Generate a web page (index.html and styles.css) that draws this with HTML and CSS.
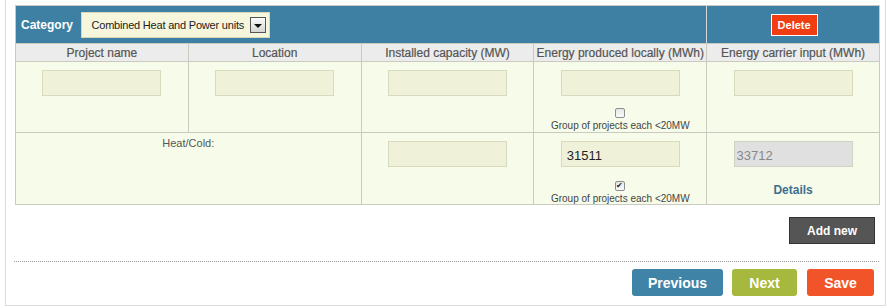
FILE: index.html
```html
<!DOCTYPE html>
<html lang="en">
<head>
<meta charset="UTF-8" />
<title>Projects</title>
<link rel="stylesheet" href="styles.css">
</head>
<body>

<div class="panel">
  <table class="grid">
    <tr class="cat-row">
      <td colspan="4" class="cat-cell">
        <span class="cat-label">Category</span>
        <span class="fake-select">
          <select>
            <option>Combined Heat and Power units</option>
          </select>
          <span class="arrow"></span>
        </span>
      </td>
      <td class="del-cell"><button class="btn-delete">Delete</button></td>
    </tr>
    <tr class="head-row">
      <th>Project name</th>
      <th>Location</th>
      <th>Installed capacity (MW)</th>
      <th>Energy produced locally (MWh)</th>
      <th>Energy carrier input (MWh)</th>
    </tr>
    <tr class="data-row">
      <td><input type="text" class="field"></td>
      <td><input type="text" class="field"></td>
      <td><input type="text" class="field"></td>
      <td>
        <input type="text" class="field">
        <div class="group">
          <input type="checkbox" class="tick">
          <div class="group-text">Group of projects each &lt;20MW</div>
        </div>
      </td>
      <td><input type="text" class="field"></td>
    </tr>
    <tr class="data-row second">
      <td colspan="2" class="caption">Heat/Cold:</td>
      <td><input type="text" class="field"></td>
      <td>
        <input type="text" class="field" value="31511">
        <div class="group">
          <input type="checkbox" class="tick" checked>
          <div class="group-text">Group of projects each &lt;20MW</div>
        </div>
      </td>
      <td>
        <input type="text" class="field" value="33712" disabled>
        <div class="details"><a href="#">Details</a></div>
      </td>
    </tr>
  </table>

  <div class="add-bar">
    <button class="btn btn-add">Add new</button>
  </div>

  <div class="divider"></div>

  <div class="nav-bar">
    <button class="btn btn-prev">Previous</button>
    <button class="btn btn-next">Next</button>
    <button class="btn btn-save">Save</button>
  </div>
</div>

</body>
</html>
```

FILE: styles.css
```css
body {
  margin: 0;
  background: #fff;
  font-family: 'Liberation Sans', Arial, sans-serif;
  color: #444;
}
.panel {
  margin: 0 5px;
  padding: 5px 5px 0 9px;
  height: 300px;
  border: 1px solid #dcdcdc;
  border-top: none;
}
.grid {
  width: 865px;
  border-collapse: collapse;
  table-layout: fixed;
  border: 1px solid #c9cbc0;
}
.grid td, .grid th {
  border: 1px solid #c9cbc0;
  padding: 0;
}
.cat-row td {
  background: #3d80a3;
  height: 37px;
}
.cat-row .cat-cell {
  border-right: 1px solid #d6d6d6;
}
.cat-label {
  display: inline-block;
  vertical-align: middle;
  margin: 0 4px 0 5px;
  font-size: 12px;
  font-weight: bold;
  color: #fff;
}
.fake-select {
  display: inline-flex;
  align-items: center;
  vertical-align: middle;
  width: 187px;
  height: 24px;
  background: #f6f6dd;
  border: 1px solid #d8d8b8;
  margin-top: 1px;
}
.fake-select select {
  appearance: none;
  -webkit-appearance: none;
  border: none;
  background: transparent;
  font-family: 'Liberation Sans', Arial, sans-serif;
  font-size: 11px;
  letter-spacing: -0.2px;
  color: #222;
  padding: 0 0 0 9px;
  width: 166px;
  margin-right: 2px;
}
.arrow {
  display: inline-flex;
  align-items: center;
  justify-content: center;
  width: 14px;
  height: 14px;
  border: 1px solid #555;
  background: linear-gradient(#fafafa, #d6d6d6);
}
.arrow::after {
  content: '';
  border-left: 4px solid transparent;
  border-right: 4px solid transparent;
  border-top: 4px solid #111;
  margin-top: 1px;
}
.del-cell {
  text-align: center;
}
.btn-delete {
  background: #f13d12;
  color: #fff;
  border: 1px solid #fff;
  font-family: 'Liberation Sans', Arial, sans-serif;
  font-size: 11px;
  font-weight: bold;
  width: 47px;
  height: 22px;
  padding: 0;
  margin-left: 2px;
}
.head-row th {
  background: #ececec;
  color: #555;
  font-size: 12px;
  font-weight: normal;
  height: 17px;
  padding: 0;
  -webkit-text-stroke: 0.2px #555;
}
.data-row td {
  background: #f6fce9;
  text-align: center;
  vertical-align: top;
  height: 70px;
}
.data-row.second td {
  height: 66px;
}
.field {
  display: block;
  box-sizing: border-box;
  width: 119px;
  height: 26px;
  margin: 8px auto 0;
  background: #eff1d8;
  border: 1px solid #d7dabd;
  font-family: 'Liberation Sans', Arial, sans-serif;
  font-size: 13px;
  color: #222;
  padding: 2px 0 0 5px;
}
.field:disabled {
  background: #e0e0e0;
  border-color: #d0d2c2;
  color: #888;
  padding: 2px 0 0 2px;
}
.group {
  margin-top: 12px;
  font-size: 10px;
  line-height: 11px;
  color: #444;
}
.second .group {
  margin-top: 14px;
}
.tick {
  appearance: none;
  -webkit-appearance: none;
  display: block;
  box-sizing: border-box;
  width: 10px;
  height: 10px;
  margin: 0 auto;
  border: 1px solid #8e8e8e;
  border-radius: 2px;
  background: linear-gradient(#e6e6e6, #fbfbfb);
  position: relative;
  overflow: hidden;
}
.tick:checked::after {
  content: '✔';
  position: absolute;
  left: 0;
  top: 0;
  font-size: 8px;
  line-height: 8px;
  color: #222;
}
.group-text {
  margin-top: 2px;
}
.caption {
  font-size: 11px;
  color: #555;
  padding-top: 4px !important;
}
.details {
  margin-top: 16px;
  font-size: 12px;
  line-height: 14px;
  font-weight: bold;
}
.details a {
  color: #3e6f90;
  text-decoration: none;
}
.add-bar {
  display: flex;
  justify-content: flex-end;
  padding-right: 5px;
  margin-top: 12px;
}
.divider {
  margin: 17px 1px 0 -1px;
  border-top: 1px dotted #999;
}
.nav-bar {
  display: flex;
  justify-content: flex-end;
  gap: 9px;
  padding-right: 6px;
  margin-top: 7px;
}
.btn {
  border: none;
  color: #fff;
  font-family: 'Liberation Sans', Arial, sans-serif;
  font-weight: bold;
  height: 27px;
  padding: 0;
  border-radius: 3px;
}
.btn-add {
  background: #555;
  border: 1px solid #333;
  border-radius: 0;
  width: 86px;
  font-size: 12px;
}
.btn-prev {
  background: #3f83a7;
  width: 91px;
  font-size: 14px;
}
.btn-next {
  background: #a6b83d;
  width: 65px;
  font-size: 14px;
  margin-right: 1px;
}
.btn-save {
  background: #f2542a;
  width: 67px;
  font-size: 14px;
}
```
